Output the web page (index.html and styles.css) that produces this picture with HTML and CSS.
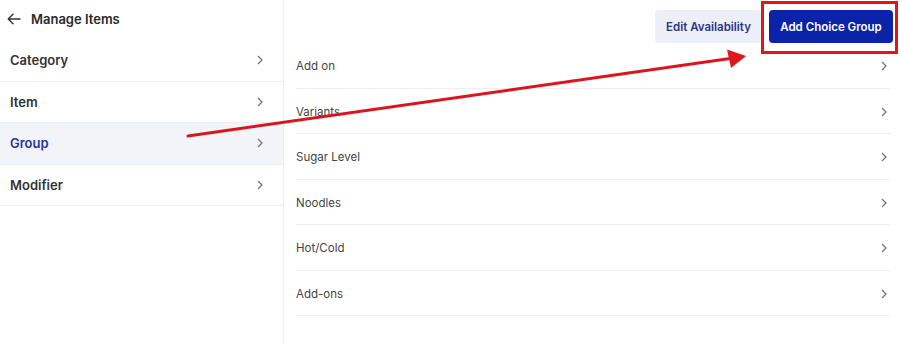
FILE: index.html
```html
<!DOCTYPE html>
<html>
<head>
<meta charset="utf-8">
<link rel="stylesheet" href="styles.css">
</head>
<body>
<div class="app">
  <aside class="sidebar">
    <div class="side-head">
      <svg class="back" width="14" height="12" viewBox="0 0 14 12"><path d="M13 6H1.5M6 1.2L1.2 6 6 10.8" fill="none" stroke="#333" stroke-width="1.4" stroke-linecap="round" stroke-linejoin="round"/></svg>
      <span>Manage Items</span>
    </div>
    <div class="side-row"><span>Category</span><svg class="chev" width="8" height="10" viewBox="0 0 8 10"><path d="M2 1l4 4-4 4" fill="none" stroke="#777" stroke-width="1.3"/></svg></div>
    <div class="side-row"><span>Item</span><svg class="chev" width="8" height="10" viewBox="0 0 8 10"><path d="M2 1l4 4-4 4" fill="none" stroke="#777" stroke-width="1.3"/></svg></div>
    <div class="side-row active"><span>Group</span><svg class="chev" width="8" height="10" viewBox="0 0 8 10"><path d="M2 1l4 4-4 4" fill="none" stroke="#777" stroke-width="1.3"/></svg></div>
    <div class="side-row"><span>Modifier</span><svg class="chev" width="8" height="10" viewBox="0 0 8 10"><path d="M2 1l4 4-4 4" fill="none" stroke="#777" stroke-width="1.3"/></svg></div>
  </aside>
  <main class="main">
    <div class="toolbar">
      <button class="btn btn-light">Edit Availability</button>
      <button class="btn btn-primary">Add Choice Group</button>
    </div>
    <div class="list">
      <div class="list-row"><span>Add on</span><svg class="chev" width="8" height="10" viewBox="0 0 8 10"><path d="M2 1l4 4-4 4" fill="none" stroke="#777" stroke-width="1.3"/></svg></div>
      <div class="list-row"><span>Variants</span><svg class="chev" width="8" height="10" viewBox="0 0 8 10"><path d="M2 1l4 4-4 4" fill="none" stroke="#777" stroke-width="1.3"/></svg></div>
      <div class="list-row"><span>Sugar Level</span><svg class="chev" width="8" height="10" viewBox="0 0 8 10"><path d="M2 1l4 4-4 4" fill="none" stroke="#777" stroke-width="1.3"/></svg></div>
      <div class="list-row"><span>Noodles</span><svg class="chev" width="8" height="10" viewBox="0 0 8 10"><path d="M2 1l4 4-4 4" fill="none" stroke="#777" stroke-width="1.3"/></svg></div>
      <div class="list-row"><span>Hot/Cold</span><svg class="chev" width="8" height="10" viewBox="0 0 8 10"><path d="M2 1l4 4-4 4" fill="none" stroke="#777" stroke-width="1.3"/></svg></div>
      <div class="list-row"><span>Add-ons</span><svg class="chev" width="8" height="10" viewBox="0 0 8 10"><path d="M2 1l4 4-4 4" fill="none" stroke="#777" stroke-width="1.3"/></svg></div>
    </div>
  </main>
  <svg class="annot" width="900" height="344" viewBox="0 0 900 344">
    <rect x="762.5" y="2.5" width="134" height="50" fill="none" stroke="#e0161c" stroke-width="3"/>
    <line x1="188" y1="136" x2="730" y2="58.5" stroke="#d8161c" stroke-width="3" stroke-linecap="round"/>
    <polygon points="746,56 727,49.5 731,68" fill="#e0161c"/>
  </svg>
</div>
</body>
</html>
```
FILE: styles.css
```css
* { box-sizing: border-box; }
html, body { margin: 0; padding: 0; background: #fff; }
body {
  font-family: Inter, "Noto Sans", "Liberation Sans", sans-serif;
  width: 900px;
  height: 344px;
  overflow: hidden;
}
.app {
  position: relative;
  display: flex;
  height: 344px;
}
.sidebar {
  width: 284px;
  flex: none;
  border-right: 1px solid #ececef;
}
.side-head {
  height: 40px;
  display: flex;
  align-items: center;
  gap: 10px;
  padding: 0 0 2px 7px;
  font-size: 13px;
  font-weight: 600;
  color: #2a2a2a;
}
.back { display: block; }
.side-row {
  height: 41.5px;
  display: flex;
  align-items: center;
  justify-content: space-between;
  padding: 0 19px 0 10px;
  border-bottom: 1px solid #eeeef1;
  font-size: 13px;
  font-weight: 600;
  color: #333;
}
.side-row.active {
  background: #f3f4f9;
  color: #27359a;
}
.main {
  flex: 1;
  padding: 0 7px 0 12px;
}
.toolbar {
  height: 43px;
  display: flex;
  justify-content: flex-end;
  align-items: flex-end;
  gap: 7px;
}
.list { margin-right: 3px; }
.btn {
  height: 33px;
  border: none;
  border-radius: 4px;
  font-family: inherit;
  font-size: 11.5px;
  font-weight: 600;
  padding: 0;
  white-space: nowrap;
}
.btn-light {
  width: 107px;
  background: #eceef8;
  color: #2b3787;
}
.btn-primary {
  width: 124px;
  background: #0b23a8;
  color: #fff;
}
.list-row {
  height: 45.5px;
  display: flex;
  align-items: center;
  justify-content: space-between;
  padding: 2px 2px 0 0;
  border-bottom: 1px solid #eeeef1;
  font-size: 11.5px;
  color: #444;
}
.chev { display: block; }
.annot {
  position: absolute;
  left: 0;
  top: 0;
  pointer-events: none;
}
```
